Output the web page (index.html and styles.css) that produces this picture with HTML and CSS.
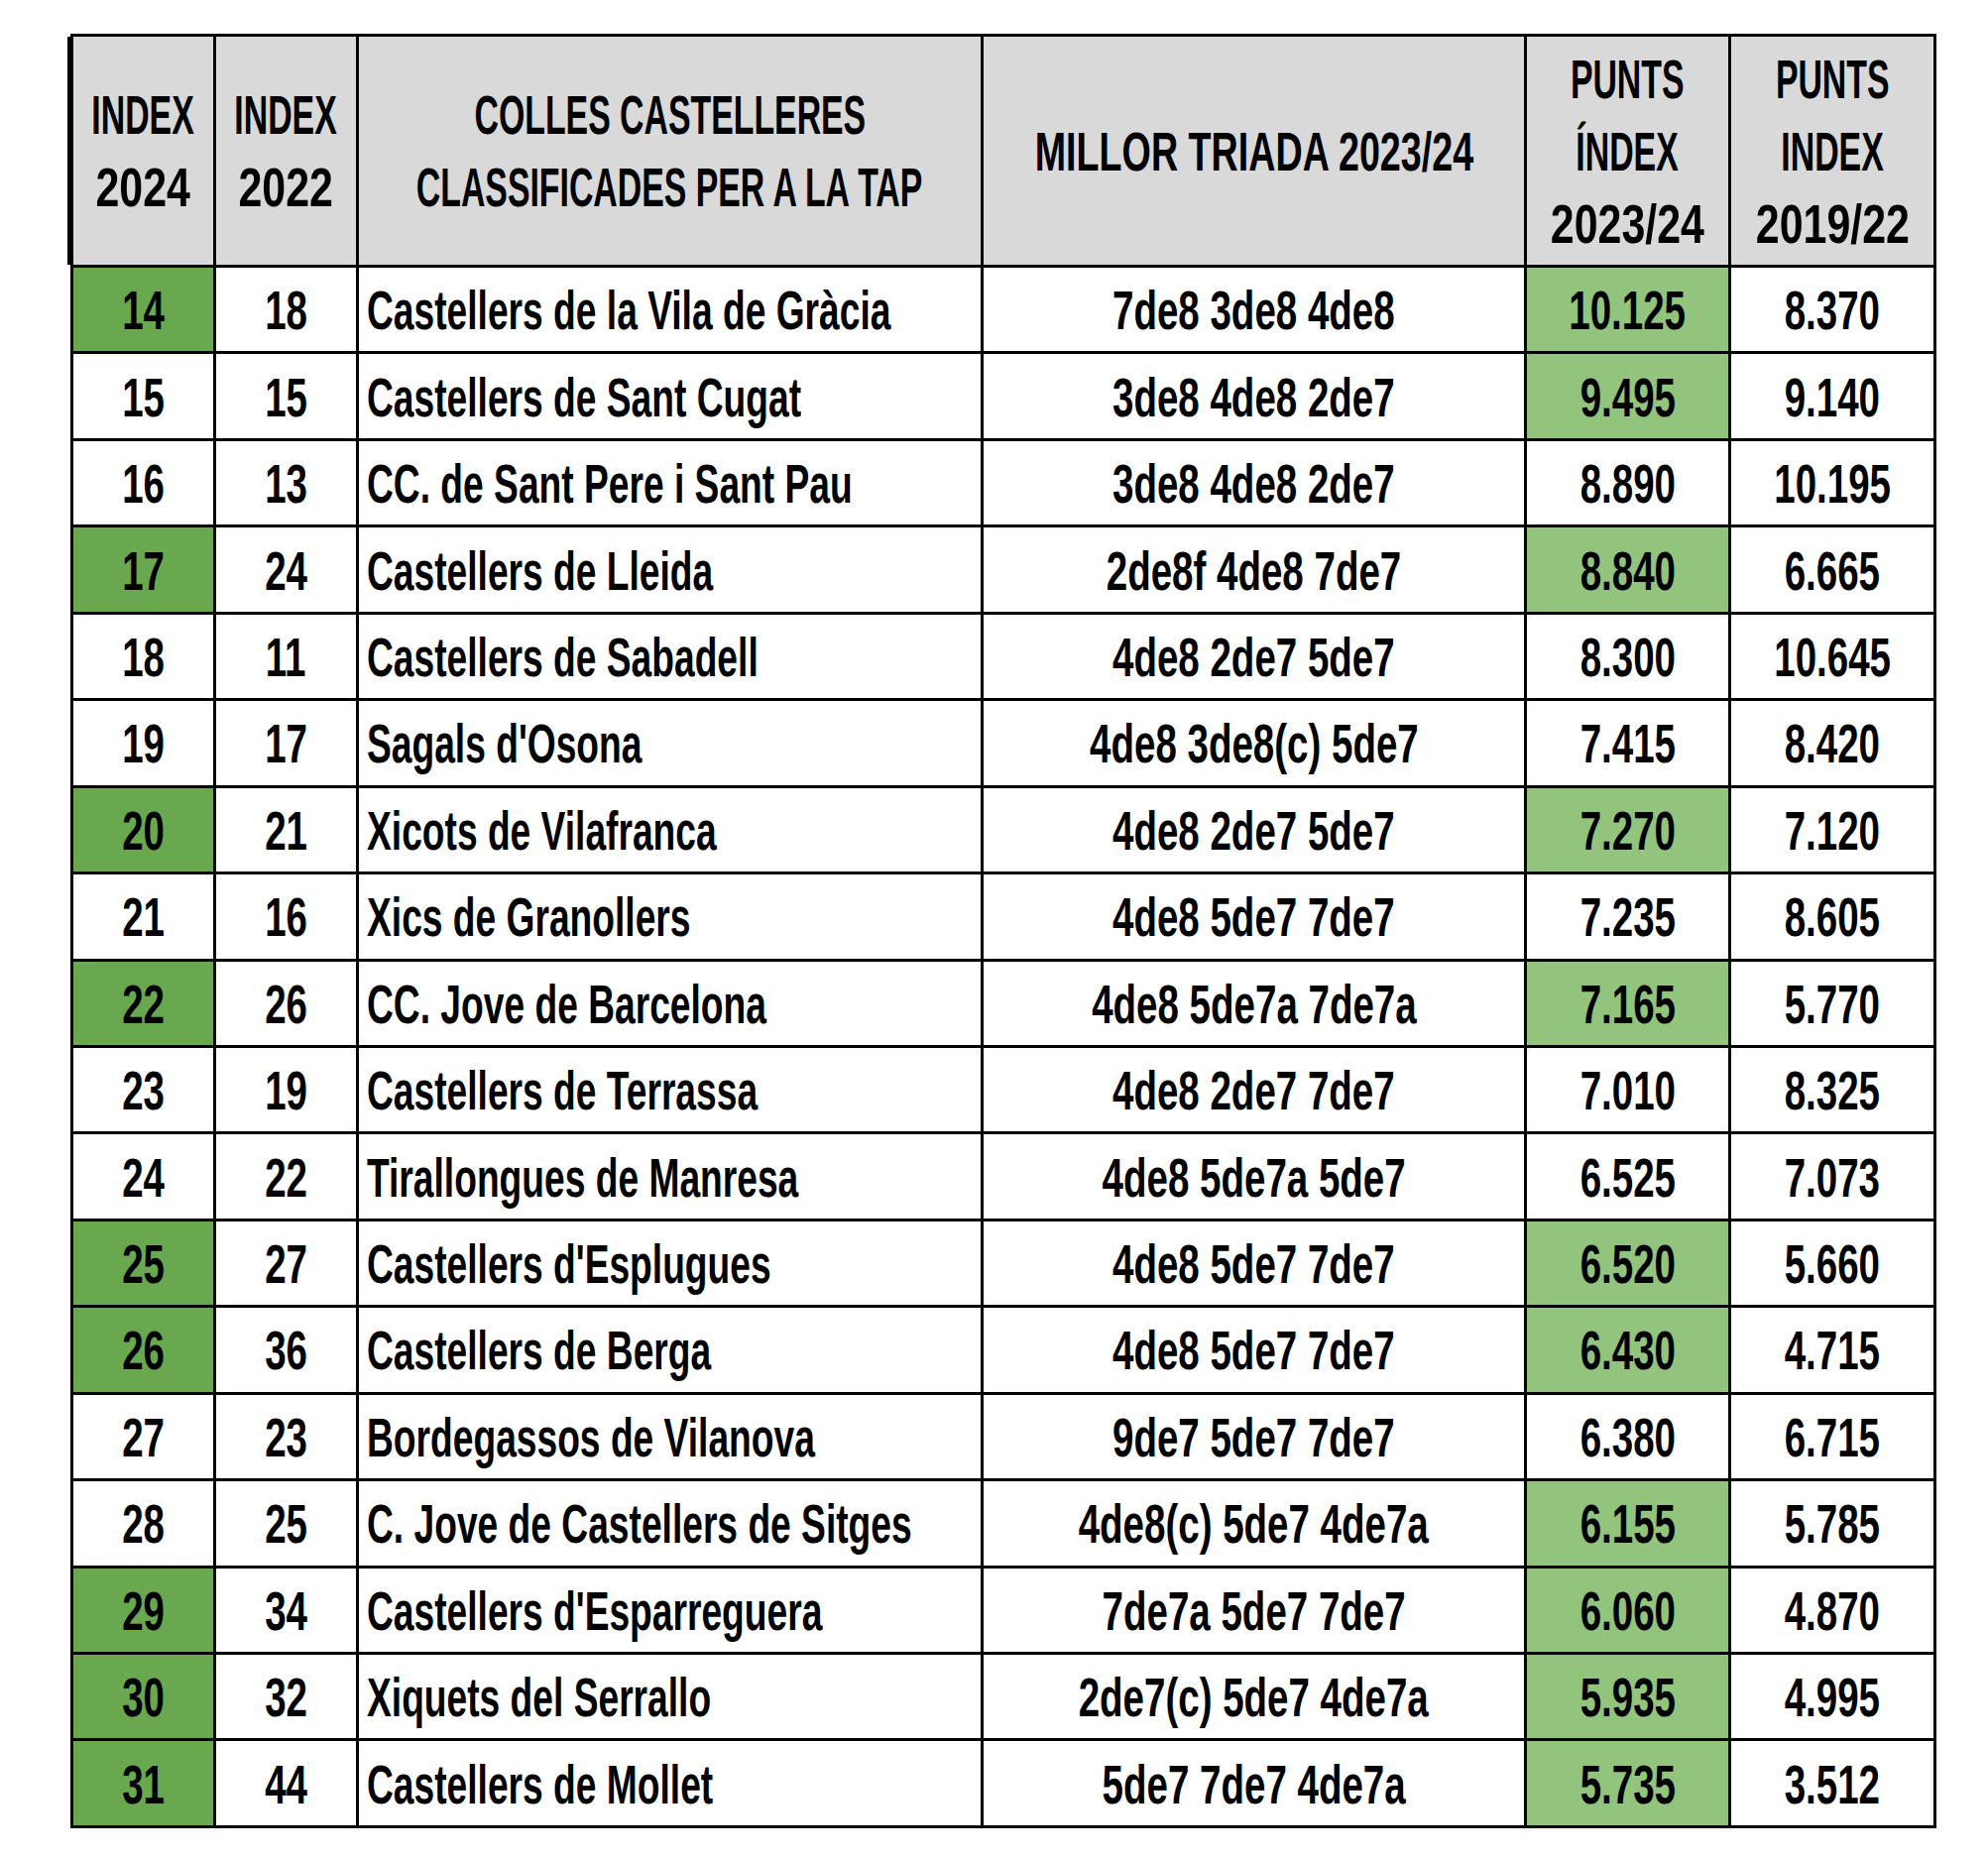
FILE: index.html
```html
<!DOCTYPE html>
<html lang="ca">
<head>
<meta charset="utf-8">
<title>Índex colles castelleres</title>
<link rel="stylesheet" href="styles.css">
</head>
<body>
<div class="sheet">
  <div class="c h first"><span class="t cap">INDEX</span><span class="t dig">2024</span></div>
  <div class="c h"><span class="t cap">INDEX</span><span class="t dig">2022</span></div>
  <div class="c h"><span class="t cap">COLLES CASTELLERES</span><span class="t cap">CLASSIFICADES PER A LA TAP</span></div>
  <div class="c h"><span class="t mix">MILLOR TRIADA 2023/24</span></div>
  <div class="c h"><span class="t cap">PUNTS</span><span class="t cap">ÍNDEX</span><span class="t dig">2023/24</span></div>
  <div class="c h"><span class="t cap">PUNTS</span><span class="t cap">INDEX</span><span class="t dig">2019/22</span></div>

  <div class="c dk"><span class="t">14</span></div><div class="c"><span class="t">18</span></div><div class="c name"><span class="t">Castellers de la Vila de Gràcia</span></div><div class="c"><span class="t">7de8 3de8 4de8</span></div><div class="c lt"><span class="t">10.125</span></div><div class="c"><span class="t">8.370</span></div>
  <div class="c"><span class="t">15</span></div><div class="c"><span class="t">15</span></div><div class="c name"><span class="t">Castellers de Sant Cugat</span></div><div class="c"><span class="t">3de8 4de8 2de7</span></div><div class="c lt"><span class="t">9.495</span></div><div class="c"><span class="t">9.140</span></div>
  <div class="c"><span class="t">16</span></div><div class="c"><span class="t">13</span></div><div class="c name"><span class="t">CC. de Sant Pere i Sant Pau</span></div><div class="c"><span class="t">3de8 4de8 2de7</span></div><div class="c"><span class="t">8.890</span></div><div class="c"><span class="t">10.195</span></div>
  <div class="c dk"><span class="t">17</span></div><div class="c"><span class="t">24</span></div><div class="c name"><span class="t">Castellers de Lleida</span></div><div class="c"><span class="t">2de8f 4de8 7de7</span></div><div class="c lt"><span class="t">8.840</span></div><div class="c"><span class="t">6.665</span></div>
  <div class="c"><span class="t">18</span></div><div class="c"><span class="t">11</span></div><div class="c name"><span class="t">Castellers de Sabadell</span></div><div class="c"><span class="t">4de8 2de7 5de7</span></div><div class="c"><span class="t">8.300</span></div><div class="c"><span class="t">10.645</span></div>
  <div class="c"><span class="t">19</span></div><div class="c"><span class="t">17</span></div><div class="c name"><span class="t">Sagals d'Osona</span></div><div class="c"><span class="t">4de8 3de8(c) 5de7</span></div><div class="c"><span class="t">7.415</span></div><div class="c"><span class="t">8.420</span></div>
  <div class="c dk"><span class="t">20</span></div><div class="c"><span class="t">21</span></div><div class="c name"><span class="t">Xicots de Vilafranca</span></div><div class="c"><span class="t">4de8 2de7 5de7</span></div><div class="c lt"><span class="t">7.270</span></div><div class="c"><span class="t">7.120</span></div>
  <div class="c"><span class="t">21</span></div><div class="c"><span class="t">16</span></div><div class="c name"><span class="t">Xics de Granollers</span></div><div class="c"><span class="t">4de8 5de7 7de7</span></div><div class="c"><span class="t">7.235</span></div><div class="c"><span class="t">8.605</span></div>
  <div class="c dk"><span class="t">22</span></div><div class="c"><span class="t">26</span></div><div class="c name"><span class="t">CC. Jove de Barcelona</span></div><div class="c"><span class="t">4de8 5de7a 7de7a</span></div><div class="c lt"><span class="t">7.165</span></div><div class="c"><span class="t">5.770</span></div>
  <div class="c"><span class="t">23</span></div><div class="c"><span class="t">19</span></div><div class="c name"><span class="t">Castellers de Terrassa</span></div><div class="c"><span class="t">4de8 2de7 7de7</span></div><div class="c"><span class="t">7.010</span></div><div class="c"><span class="t">8.325</span></div>
  <div class="c"><span class="t">24</span></div><div class="c"><span class="t">22</span></div><div class="c name"><span class="t">Tirallongues de Manresa</span></div><div class="c"><span class="t">4de8 5de7a 5de7</span></div><div class="c"><span class="t">6.525</span></div><div class="c"><span class="t">7.073</span></div>
  <div class="c dk"><span class="t">25</span></div><div class="c"><span class="t">27</span></div><div class="c name"><span class="t">Castellers d'Esplugues</span></div><div class="c"><span class="t">4de8 5de7 7de7</span></div><div class="c lt"><span class="t">6.520</span></div><div class="c"><span class="t">5.660</span></div>
  <div class="c dk"><span class="t">26</span></div><div class="c"><span class="t">36</span></div><div class="c name"><span class="t">Castellers de Berga</span></div><div class="c"><span class="t">4de8 5de7 7de7</span></div><div class="c lt"><span class="t">6.430</span></div><div class="c"><span class="t">4.715</span></div>
  <div class="c"><span class="t">27</span></div><div class="c"><span class="t">23</span></div><div class="c name"><span class="t">Bordegassos de Vilanova</span></div><div class="c"><span class="t">9de7 5de7 7de7</span></div><div class="c"><span class="t">6.380</span></div><div class="c"><span class="t">6.715</span></div>
  <div class="c"><span class="t">28</span></div><div class="c"><span class="t">25</span></div><div class="c name"><span class="t">C. Jove de Castellers de Sitges</span></div><div class="c"><span class="t">4de8(c) 5de7 4de7a</span></div><div class="c lt"><span class="t">6.155</span></div><div class="c"><span class="t">5.785</span></div>
  <div class="c dk"><span class="t">29</span></div><div class="c"><span class="t">34</span></div><div class="c name"><span class="t">Castellers d'Esparreguera</span></div><div class="c"><span class="t">7de7a 5de7 7de7</span></div><div class="c lt"><span class="t">6.060</span></div><div class="c"><span class="t">4.870</span></div>
  <div class="c dk"><span class="t">30</span></div><div class="c"><span class="t">32</span></div><div class="c name"><span class="t">Xiquets del Serrallo</span></div><div class="c"><span class="t">2de7(c) 5de7 4de7a</span></div><div class="c lt"><span class="t">5.935</span></div><div class="c"><span class="t">4.995</span></div>
  <div class="c dk"><span class="t">31</span></div><div class="c"><span class="t">44</span></div><div class="c name"><span class="t">Castellers de Mollet</span></div><div class="c"><span class="t">5de7 7de7 4de7a</span></div><div class="c lt"><span class="t">5.735</span></div><div class="c"><span class="t">3.512</span></div>
</div>
</body>
</html>
```
FILE: styles.css
```css
html, body {
  margin: 0;
  padding: 0;
  background: #ffffff;
}

body {
  font-family: "Liberation Sans", Arial, sans-serif;
  font-weight: 700;
  font-size: 55px;
  color: #000000;
}

.sheet {
  display: grid;
  grid-template-columns: 141px 141px 627px 545px 203px 204px;
  grid-template-rows: 230px repeat(18, 84.44px);
  gap: 3px;
  padding: 3px;
  background: #000000;
  width: max-content;
  margin: 34px 0 0 71px;
}

.c {
  display: flex;
  align-items: center;
  justify-content: center;
  background: #ffffff;
  padding-top: 3px;
  box-sizing: border-box;
  min-width: 0;
  overflow: visible;
}

.c.name {
  justify-content: flex-start;
  padding-left: 8px;
}

.c.dk {
  background: #6aa84f;
}

.c.lt {
  background: #93c47d;
}

.c.h {
  background: #d9d9d9;
  flex-direction: column;
  padding-top: 2px;
}

.c.h.first {
  box-shadow: -6px 0 0 0 #000000;
}

.t {
  display: inline-block;
  white-space: nowrap;
  line-height: 55px;
  transform: scaleX(0.70);
  transform-origin: center center;
  flex: none;
}

.name .t {
  transform: scaleX(0.676);
  transform-origin: left center;
}

.h .t {
  line-height: 73px;
}

.h .t.cap {
  transform: scaleX(0.615);
}

.h .t.dig {
  transform: scaleX(0.78);
}

.h .t.mix {
  transform: scaleX(0.685);
}
```
